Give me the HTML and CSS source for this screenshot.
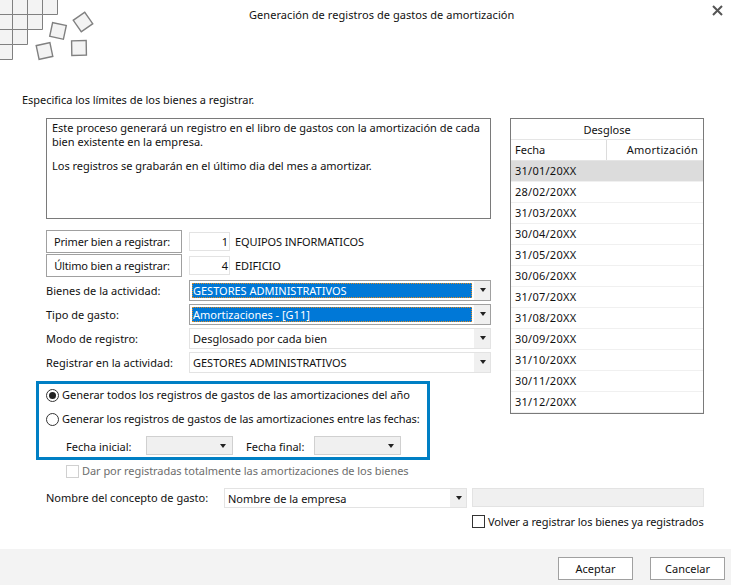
FILE: index.html
```html
<!DOCTYPE html>
<html lang="es">
<head>
<meta charset="utf-8">
<title>Generación de registros de gastos de amortización</title>
<link rel="stylesheet" href="styles.css">
</head>
<body>
<div class="dialog">
  <svg class="logo" width="100" height="62" viewBox="0 0 100 62" aria-hidden="true">
    <g fill="#f3f3f3" stroke="#808080" stroke-width="1">
      <path d="M-1 -1H12.5V14.5H-1zM12.5 -1H27.5V14.5H12.5zM27.5 -1H42.5V14.5H27.5zM42.5 -1H57.5V14.5H42.5z"/>
      <path d="M-1 14.5H12.5V29.5H-1zM12.5 14.5H27.5V29.5H12.5zM27.5 14.5H42.5V29.5H27.5z"/>
      <path d="M-1 29.5H12.5V44.5H-1zM12.5 29.5H27.5V44.5H12.5z"/>
      <path d="M-1 44.5H12.5V59.5H-1z"/>
    </g>
    <g fill="#f3f3f3" stroke="#808080" stroke-width="1.4">
      <rect x="51" y="24" width="14" height="14" transform="rotate(12 58.3 31)"/>
      <rect x="76" y="15" width="14" height="14" transform="rotate(-35 83 22)"/>
      <rect x="71.7" y="40.7" width="14.6" height="14.6" transform="rotate(-1 79 48)"/>
      <rect x="37.5" y="44" width="14" height="14" transform="rotate(-12 44.5 51)"/>
    </g>
  </svg>

  <header class="titlebar">
    <h1 class="title">Generación de registros de gastos de amortización</h1>
    <svg class="close" width="11" height="11" viewBox="0 0 11 11" aria-label="Cerrar">
      <path d="M1 1L10 10M10 1L1 10" stroke="#555" stroke-width="2"/>
    </svg>
  </header>

  <main class="content">
    <p class="lead">Especifica los límites de los bienes a registrar.</p>

    <div class="columns">
      <section class="left">
        <div class="notebox">
          <p>Este proceso generará un registro en el libro de gastos con la amortización de cada bien existente en la empresa.</p>
          <p>Los registros se grabarán en el último dia del mes a amortizar.</p>
        </div>

        <div class="range-row first">
          <button class="range-btn" type="button">Primer bien a registrar:</button>
          <span class="num">1</span>
          <span class="range-name">EQUIPOS INFORMATICOS</span>
        </div>
        <div class="range-row">
          <button class="range-btn" type="button">Último bien a registrar:</button>
          <span class="num">4</span>
          <span class="range-name">EDIFICIO</span>
        </div>

        <div class="field-row">
          <span class="field-label">Bienes de la actividad:</span>
          <div class="select active"><span class="value selected">GESTORES ADMINISTRATIVOS</span><span class="arrow"></span></div>
        </div>
        <div class="field-row">
          <span class="field-label">Tipo de gasto:</span>
          <div class="select active"><span class="value selected">Amortizaciones - [G11]</span><span class="arrow"></span></div>
        </div>
        <div class="field-row">
          <span class="field-label">Modo de registro:</span>
          <div class="select"><span class="value">Desglosado por cada bien</span><span class="arrow"></span></div>
        </div>
        <div class="field-row">
          <span class="field-label">Registrar en la actividad:</span>
          <div class="select"><span class="value">GESTORES ADMINISTRATIVOS</span><span class="arrow"></span></div>
        </div>

        <div class="options">
          <div class="radio-row"><span class="radio on"></span>Generar todos los registros de gastos de las amortizaciones del año</div>
          <div class="radio-row second"><span class="radio"></span>Generar los registros de gastos de las amortizaciones entre las fechas:</div>
          <div class="dates">
            <span class="date-label initial">Fecha inicial:</span>
            <div class="select date"><span class="arrow"></span></div>
            <span class="date-label final">Fecha final:</span>
            <div class="select date"><span class="arrow"></span></div>
          </div>
        </div>

        <div class="check-row disabled"><span class="check"></span>Dar por registradas totalmente las amortizaciones de los bienes</div>
      </section>

      <aside class="breakdown">
        <div class="bd-title">Desglose</div>
        <div class="bd-head"><span class="bd-date">Fecha</span><span class="bd-amount">Amortización</span></div>
        <div class="bd-row current">31/01/20XX</div>
        <div class="bd-row">28/02/20XX</div>
        <div class="bd-row">31/03/20XX</div>
        <div class="bd-row">30/04/20XX</div>
        <div class="bd-row">31/05/20XX</div>
        <div class="bd-row">30/06/20XX</div>
        <div class="bd-row">31/07/20XX</div>
        <div class="bd-row">31/08/20XX</div>
        <div class="bd-row">30/09/20XX</div>
        <div class="bd-row">31/10/20XX</div>
        <div class="bd-row">30/11/20XX</div>
        <div class="bd-row">31/12/20XX</div>
      </aside>
    </div>

    <div class="concept">
      <span class="concept-label">Nombre del concepto de gasto:</span>
      <div class="select concept-select"><span class="value">Nombre de la empresa</span><span class="arrow"></span></div>
      <div class="concept-input"></div>
    </div>
    <div class="again"><span class="check dark"></span>Volver a registrar los bienes ya registrados</div>
  </main>

  <footer class="actions">
    <button class="action" type="button">Aceptar</button>
    <button class="action" type="button">Cancelar</button>
  </footer>
</div>
</body>
</html>
```

FILE: styles.css
```css
* { box-sizing: border-box; }
html, body { margin: 0; padding: 0; }
body {
  width: 731px;
  height: 585px;
  overflow: hidden;
  background: #fff;
  color: #111;
  font-family: "Noto Sans", "Open Sans", sans-serif;
  font-size: 11px;
  line-height: 14px;
}
.dialog {
  position: relative;
  display: flex;
  flex-direction: column;
  width: 731px;
  height: 585px;
}
.logo { position: absolute; left: 0; top: 0; }
.titlebar {
  display: flex;
  align-items: center;
  justify-content: space-between;
  height: 30px;
  padding-left: 249px;
  padding-right: 8px;
}
.title { margin: 0; font-size: 11px; font-weight: 400; line-height: 14px; letter-spacing: 0.06px; }
.close { display: block; align-self: flex-start; margin-top: 5px; }
.content { flex: 1; padding: 63px 27px 0 21px; }
.lead { margin: 0 0 0 1px; height: 25px; letter-spacing: -0.02px; }
.columns { display: flex; align-items: flex-start; gap: 19px; padding-left: 25px; }
.left { width: 445px; flex: none; }

.notebox {
  height: 101px;
  border: 1px solid #7a7a7a;
  padding: 2px 5px;
  letter-spacing: -0.01px;
}
.notebox p { margin: 0 0 10px; }

.range-row { display: flex; align-items: center; height: 23px; margin-top: 1px; }
.range-row.first { margin-top: 11px; }
.range-btn {
  width: 136px;
  height: 23px;
  padding: 0 4px 0 0;
  border: 1px solid #a0a0a0;
  background: #fff;
  color: inherit;
  font: inherit;
  letter-spacing: -0.15px;
}
.num {
  width: 41px;
  height: 19px;
  margin-left: 7px;
  padding: 2px 1px 0 0;
  border: 1px solid #e3e3e3;
  text-align: right;
}
.range-name { margin-left: 5px; letter-spacing: -0.12px; }

.field-row { display: flex; align-items: center; height: 21px; margin-top: 3px; }
.field-label { width: 143px; flex: none; }
.select {
  display: flex;
  align-items: stretch;
  flex: 1;
  height: 21px;
  border: 1px solid #e3e3e3;
  background: #fff;
}
.select.active { border-color: #a0a0a0; }
.value {
  flex: 1;
  padding: 3px 0 0 3px;
  white-space: nowrap;
}
.value.selected {
  margin: 2px;
  padding: 0 0 0 1px;
  background: #0078d7;
  color: #fff;
  outline: 1px dotted #e08a20;
  outline-offset: -1px;
  line-height: 15px;
}
.arrow {
  position: relative;
  width: 16px;
  flex: none;
  background: #f0f0f0;
}
.arrow::after {
  content: "";
  position: absolute;
  left: 6px;
  top: 7px;
  border-left: 3px solid transparent;
  border-right: 3px solid transparent;
  border-top: 4px solid #222;
}

.options {
  width: 394px;
  height: 79px;
  margin: 8px 0 0 -10px;
  border: 3px solid #007fc4;
  padding: 2px 0 0 7px;
}
.radio-row { display: flex; align-items: center; height: 18px; letter-spacing: -0.02px; }
.radio-row.second { margin-top: 6px; letter-spacing: -0.07px; }
.radio {
  position: relative;
  width: 13px;
  height: 13px;
  margin-right: 3px;
  border: 1px solid #333;
  border-radius: 50%;
  flex: none;
}
.radio.on::after {
  content: "";
  position: absolute;
  left: 2px;
  top: 2px;
  width: 7px;
  height: 7px;
  border-radius: 50%;
  background: #222;
}
.dates { display: flex; align-items: center; margin-top: 8px; padding-left: 20px; }
.date-label { padding-top: 2px; }
.date-label.initial { width: 80px; }
.date-label.final { margin-left: 13px; width: 68px; }
.select.date {
  flex: none;
  width: 87px;
  height: 19px;
  border-color: #d0d0d0;
  background: #f0f0f0;
  justify-content: flex-end;
}
.date .arrow { background: none; }
.date .arrow::after { top: 7px; left: 4px; }

.check-row, .again { display: flex; align-items: center; white-space: nowrap; }
.check {
  width: 13px;
  height: 13px;
  margin-right: 3px;
  flex: none;
  border: 1px solid #d0d0d0;
}
.check.dark { border-color: #333; }
.check-row { height: 14px; margin: 4px 0 0 20px; color: #6d6d6d; letter-spacing: -0.05px; }

.breakdown { width: 194px; height: 296px; flex: none; border: 1px solid #7a7a7a; }
.bd-title { height: 21px; padding-top: 4px; text-align: center; border-bottom: 1px solid #e5e5e5; }
.bd-head { display: flex; height: 21px; border-bottom: 1px solid #e5e5e5; }
.bd-date { width: 96px; padding: 3px 0 0 4px; border-right: 1px solid #dcdcdc; }
.bd-amount { flex: 1; padding: 3px 5px 0 0; text-align: right; letter-spacing: 0.25px; }
.bd-row { height: 21px; padding: 3px 0 0 4px; border-bottom: 1px solid #f0f0f0; letter-spacing: 0.25px; }
.bd-row.current { background: #dcdcdc; }

.concept { display: flex; align-items: flex-start; height: 21px; margin-top: 10px; padding-left: 25px; }
.concept-label { width: 178px; flex: none; padding-top: 3px; }
.concept-select { flex: none; width: 243px; height: 20px; }
.concept-input {
  width: 232px;
  height: 19px;
  margin-left: 5px;
  background: #f0f0f0;
  border: 1px solid #e3e3e3;
}
.again { height: 13px; margin-top: 6px; padding-left: 451px; letter-spacing: -0.08px; }

.actions {
  display: flex;
  justify-content: flex-end;
  gap: 17px;
  height: 36px;
  padding: 8px 6px 0 0;
  background: #f3f3f3;
}
.action {
  width: 75px;
  height: 23px;
  padding: 0;
  border: 1px solid #a0a0a0;
  background: #fff;
  color: inherit;
  font: inherit;
}
```
